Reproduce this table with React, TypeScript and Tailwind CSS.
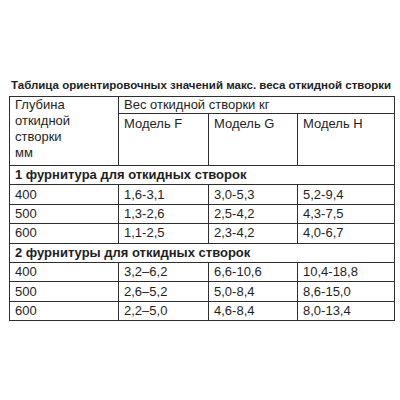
import { Fragment } from "react";

const groups = [
  {
    title: "1 фурнитура для откидных створок",
    rows: [
      ["400", "1,6-3,1", "3,0-5,3", "5,2-9,4"],
      ["500", "1,3-2,6", "2,5-4,2", "4,3-7,5"],
      ["600", "1,1-2,5", "2,3-4,2", "4,0-6,7"],
    ],
  },
  {
    title: "2 фурнитуры для откидных створок",
    rows: [
      ["400", "3,2–6,2", "6,6-10,6", "10,4-18,8"],
      ["500", "2,6–5,2", "5,0-8,4", "8,6-15,0"],
      ["600", "2,2–5,0", "4,6-8,4", "8,0-13,4"],
    ],
  },
];

const cell = "border border-[#2e2e2e] h-[19.4px] p-0 pl-[5px] align-middle leading-[16px]";

export default function App() {
  return (
    <div className="w-[400px] h-[400px] bg-white text-[#1e1e1e] font-['Liberation_Sans',Arial,sans-serif] pt-[78px]">
      <p className="pl-[11px] text-[11.5px] font-bold leading-[14px] mb-[4px] whitespace-nowrap">
        Таблица ориентировочных значений макс. веса откидной створки
      </p>
      <table className="ml-[9px] w-[385px] border-collapse text-[13px] table-fixed">
        <colgroup>
          <col className="w-[109px]" />
          <col className="w-[90px]" />
          <col className="w-[89px]" />
          <col className="w-[97px]" />
        </colgroup>
        <tbody>
          <tr>
            <td rowSpan={2} className="border border-[#2e2e2e] pl-[5px] align-top leading-[16px] pt-0">
              Глубина
              <br />
              откидной
              <br />
              створки
              <br />
              мм
            </td>
            <td colSpan={3} className="border border-[#2e2e2e] pl-[5px] h-[17px] leading-[16px] align-top">
              Вес откидной створки кг
            </td>
          </tr>
          <tr>
            <td className="border border-[#2e2e2e] pl-[5px] h-[52px] align-top pt-[2px] leading-[16px]">Модель F</td>
            <td className="border border-[#2e2e2e] pl-[5px] h-[52px] align-top pt-[2px] leading-[16px]">Модель G</td>
            <td className="border border-[#2e2e2e] pl-[5px] h-[52px] align-top pt-[2px] leading-[16px]">Модель H</td>
          </tr>
          {groups.map((g) => (
            <Fragment key={g.title}>
              <tr>
                <td colSpan={4} className={`${cell} font-bold`}>
                  {g.title}
                </td>
              </tr>
              {g.rows.map((r) => (
                <tr key={g.title + r[0]}>
                  {r.map((v, i) => (
                    <td key={i} className={cell}>
                      {v}
                    </td>
                  ))}
                </tr>
              ))}
            </Fragment>
          ))}
        </tbody>
      </table>
    </div>
  );
}
